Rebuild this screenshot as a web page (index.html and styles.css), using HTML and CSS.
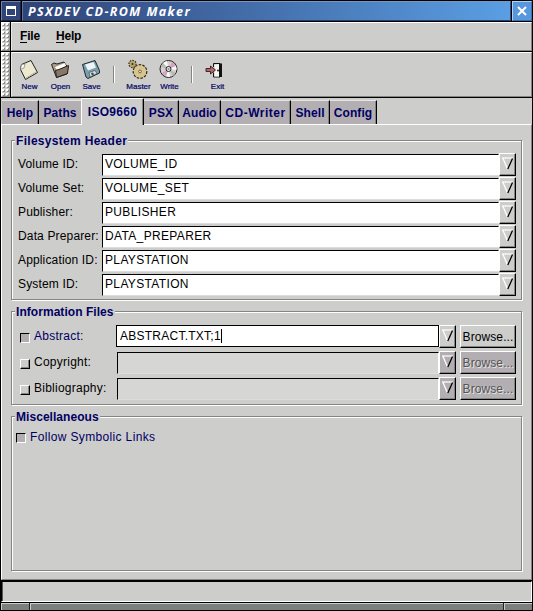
FILE: index.html
```html
<!DOCTYPE html>
<html lang="en">
<head>
<meta charset="utf-8">
<title>PSXDEV CD-ROM Maker</title>
<link rel="stylesheet" href="styles.css">
</head>
<body>
<svg class="defs" aria-hidden="true">
  <symbol id="arrow" viewBox="0 0 12 13">
    <path d="M0 1H11" stroke="#fff" stroke-width="1.2"/>
    <path d="M.8 1L5.300 11.500" stroke="#fff" fill="none" stroke-width="1.300"/>
    <path d="M10.500 1.500L5.800 12" stroke="#000" fill="none" stroke-width="1.300"/>
  </symbol>
</svg>
<div class="window">
  <header class="titlebar">
    <div class="winbtn"><svg width="10" height="10" viewBox="0 0 10 10"><path d="M0 0h10v10H0zM1 3v6h8V3z" fill="#fff" fill-rule="evenodd"/></svg></div>
    <h1 class="title">PSXDEV CD-ROM Maker</h1>
    <div class="winbtn close"><svg width="10" height="10" viewBox="0 0 10 10"><path d="M1 1L9 9M9 1L1 9" stroke="#fff" stroke-width="2"/></svg></div>
  </header>
  <div class="dock menu-dock">
    <div class="handle"></div>
    <nav class="menubar"><span class="m-file"><u>F</u>ile</span><span><u>H</u>elp</span></nav>
  </div>
  <div class="dock tool-dock">
    <div class="handle"></div>
    <div class="toolbar">
      <div class="tool">
        <svg width="20" height="22" viewBox="0 0 20 22"><path d="M2.500 5.500L12 1.500L18.500 13.500L6.500 20.500L1.500 10.500Z" fill="#ece9d0" stroke="#222"/><path d="M2.500 5.500L6 5L5 9L1.500 10.500Z" fill="#fff" stroke="#777" stroke-width=".7"/><path d="M7 19L17 13" stroke="#bbb69a"/></svg>
        <span>New</span></div>
      <div class="tool">
        <svg width="20" height="22" viewBox="0 0 20 22"><path d="M1.500 5.500L4 4L7 5L14 3L16 6L18 8L17 15L6.500 18.500Z" fill="#a99a82" stroke="#222"/><path d="M5 8L15 4L16 7L7 11Z" fill="#fff"/><path d="M6.500 18.500L5.500 11.500L9 10.500L18.500 6.500L17.500 14.500Z" fill="#8a7865" stroke="#222"/></svg>
        <span>Open</span></div>
      <div class="tool">
        <svg width="20" height="22" viewBox="0 0 20 22"><path d="M1.500 5.500L14 1.500L18.500 11.500V14L7 19.500L5 18Z" fill="#7d9dab" stroke="#182b33"/><path d="M4 5.500L12.500 3L15 8.500L7 11.500Z" fill="#eef5f7"/><path d="M8 13.500L14 11.500L16 14.500L9 18Z" fill="#d5dcdf" stroke="#344" stroke-width=".6"/><path d="M10 14L12 13.500L13 15.500L11 16.500Z" fill="#354b57"/></svg>
        <span>Save</span></div>
      <i class="sep sep-a"></i>
      <div class="tool">
        <svg width="20" height="22" viewBox="0 0 20 22"><circle cx="4.500" cy="5" r="3.300" fill="#c5b179" stroke="#352c18" stroke-width="1.800" stroke-dasharray="1.500 1"/><circle cx="4.500" cy="5" r="3" fill="#b9a66f"/><circle cx="4.500" cy="5" r="1" fill="#302713"/><circle cx="12" cy="12.500" r="6.600" fill="#d8c48e" stroke="#352c18" stroke-width="1.600" stroke-dasharray="2.500 1.200"/><circle cx="12" cy="12.500" r="6.200" fill="#d8c48e"/><circle cx="12" cy="12.500" r="1.400" fill="#eee3ba" stroke="#6c5b34" stroke-width=".9"/></svg>
        <span>Master</span></div>
      <div class="tool">
        <svg width="20" height="22" viewBox="0 0 20 22"><circle cx="9.500" cy="10" r="8.500" fill="#d7ced4" stroke="#292329"/><path d="M9.500 10L4 4A8 8 0 0 1 8 2ZM9.500 10L17 7A8 8 0 0 1 17.500 11ZM9.500 10L7 17A8 8 0 0 0 11 18Z" fill="#faf8fa"/><path d="M9.500 10L13 3A8 8 0 0 1 16.500 7ZM9.500 10L3 14A8 8 0 0 0 7 17Z" fill="#d3a4bb"/><path d="M9.500 10L2 8A8 8 0 0 1 4 4ZM9.500 10L16.500 14A8 8 0 0 1 14 17Z" fill="#b4bea9"/><circle cx="9.500" cy="10" r="2.500" fill="#eee" stroke="#222"/><circle cx="9.500" cy="10" r="1" fill="#888"/></svg>
        <span>Write</span></div>
      <i class="sep sep-b"></i>
      <div class="tool exit">
        <svg width="20" height="22" viewBox="0 0 20 22"><path d="M8.500 8V4.500H15V18H8.500V13.500" fill="none" stroke="#111"/><path d="M14 4.500H17V18H14Z" fill="#111"/><path d="M9.500 6L14 5V17.500H9.500Z" fill="#f5f5f2"/><circle cx="13" cy="11.500" r="1" fill="#222"/><path d="M1 9.500H5.500V7L10.500 11L5.500 15V12.500H1Z" fill="#b7646b" stroke="#311b1e" stroke-width=".9"/></svg>
        <span>Exit</span></div>
    </div>
  </div>
  <nav class="tabs">
    <div class="tab t-help">Help</div><div class="tab t-paths">Paths</div><div class="tab t-iso active">ISO9660</div><div class="tab t-psx">PSX</div><div class="tab t-audio">Audio</div><div class="tab t-writer">CD-Writer</div><div class="tab t-shell">Shell</div><div class="tab t-config">Config</div>
  </nav>
  <main class="panel">
    <section class="frame fs-header">
      <h2>Filesystem Header</h2>
      <div class="row"><label>Volume ID:</label><div class="entry">VOLUME_ID</div><div class="drop"><svg><use href="#arrow"/></svg></div></div>
      <div class="row"><label>Volume Set:</label><div class="entry">VOLUME_SET</div><div class="drop"><svg><use href="#arrow"/></svg></div></div>
      <div class="row"><label>Publisher:</label><div class="entry">PUBLISHER</div><div class="drop"><svg><use href="#arrow"/></svg></div></div>
      <div class="row"><label>Data Preparer:</label><div class="entry">DATA_PREPARER</div><div class="drop"><svg><use href="#arrow"/></svg></div></div>
      <div class="row"><label>Application ID:</label><div class="entry">PLAYSTATION</div><div class="drop"><svg><use href="#arrow"/></svg></div></div>
      <div class="row"><label>System ID:</label><div class="entry">PLAYSTATION</div><div class="drop"><svg><use href="#arrow"/></svg></div></div>
    </section>
    <section class="frame info">
      <h2>Information Files</h2>
      <div class="row"><i class="check on"></i><label class="navy">Abstract:</label><div class="entry focus">ABSTRACT.TXT;1<b class="caret"></b></div><div class="drop"><svg><use href="#arrow"/></svg></div><div class="button">Browse...</div></div>
      <div class="row off"><i class="check"></i><label>Copyright:</label><div class="entry"></div><div class="drop"><svg><use href="#arrow"/></svg></div><div class="button">Browse...</div></div>
      <div class="row off"><i class="check"></i><label>Bibliography:</label><div class="entry"></div><div class="drop"><svg><use href="#arrow"/></svg></div><div class="button">Browse...</div></div>
    </section>
    <section class="frame misc">
      <h2>Miscellaneous</h2>
      <div class="follow"><i class="check on"></i><label class="navy">Follow Symbolic Links</label></div>
    </section>
  </main>
  <footer class="status"></footer>
  <div class="resize"><i></i><i></i><i></i></div>
</div>
</body>
</html>
```
FILE: styles.css
```css
* { box-sizing: border-box; }
body { margin: 0; background: #000; font: 12px/14px "Liberation Sans", sans-serif; letter-spacing: .2px; color: #000; }
i, u { font-style: normal; }
svg { display: block; flex: none; }
.defs { position: absolute; width: 0; height: 0; }
.window { width: 533px; height: 611px; padding: 1px; display: flex; flex-direction: column; background: #000; overflow: hidden; }

.titlebar { height: 20px; margin-bottom: 1px; display: flex; gap: 1px; }
.winbtn { width: 20px; border: 1px solid; border-color: #7182b0 #172447 #172447 #7182b0; background: #304478; display: flex; align-items: center; justify-content: center; }
.winbtn.close { background: #5797dc; border-color: #b0d2f5 #3970ae #3970ae #b0d2f5; }
.title { flex: 1; margin: 0; padding-left: 5px; border: 1px solid; border-color: #7898c4 #2a4f86 #24406d #62749e; background: linear-gradient(90deg, #304377, #5a9ee3); color: #fff; font: italic bold 12.5px/20px "Open Sans", sans-serif; letter-spacing: 1.4px; white-space: nowrap; }

.dock { display: flex; gap: 1px; margin-bottom: 1px; }
.menu-dock { height: 29px; }
.tool-dock { height: 45px; }
.handle { width: 9px; border: 1px solid; border-color: #fff #999 #848684 #fff; background: radial-gradient(circle at 1px 1px, #fff 0 .8px, transparent 1px) 0 0 / 4px 4px, radial-gradient(circle at 2px 2px, #8c8c8c 0 .8px, transparent 1px) 0 0 / 4px 4px, #cdcdcb; }
.menubar, .toolbar { flex: 1; display: flex; background: #cdcdcb; border: 1px solid; border-color: #fff #848684 #848684 #e8e8e8; }
.menubar { padding: 6px 0 0 8px; font-weight: bold; letter-spacing: -.2px; }
.menubar .m-file { width: 36px; }
.menubar u { text-decoration: none; border-bottom: 1px solid #000; display: inline-block; height: 14px; }
.toolbar { padding: 6px 0 0 2px; color: #000063; }
.tool { width: 31px; display: flex; flex-direction: column; align-items: center; font-size: 8px; line-height: 9px; letter-spacing: 0; -webkit-text-stroke: .2px #000063; }
.tool svg { margin-left: -1px; }
.tool span { margin-top: 1px; }
.exit svg { margin-left: -6px; }
.sep { width: 2px; height: 17px; border-left: 1px solid #848684; border-right: 1px solid #fff; }
.sep-a { margin: 7px 8px 0 6px; }
.sep-b { margin: 7px 9px 0 6px; }

.tabs { height: 26px; background: #cdcdcb; display: flex; align-items: flex-end; padding-left: 1px; font-weight: bold; color: #000063; letter-spacing: .1px; }
.tab { height: 24px; background: #b3aeb1; border-top: 1px solid #e6e6e6; border-right: 1px solid #000; box-shadow: inset -1px 0 #838383; text-align: center; line-height: 24px; white-space: nowrap; }
.tab.active { height: 27px; margin-bottom: -1px; position: relative; background: #cdcdcb; border-left: 1px solid #fff; border-top-color: #fff; line-height: 26px; }
.t-help { width: 37px; }
.t-paths { width: 42px; border-right: 0; box-shadow: none; }
.t-iso { width: 63px; letter-spacing: .3px; }
.t-psx { width: 35px; }
.t-audio { width: 42px; }
.t-writer { width: 70px; letter-spacing: .5px; }
.t-shell { width: 39px; }
.t-config { width: 47px; }

.panel { height: 457px; background: #cdcdcb; border: 1px solid; border-color: #fff #848684 #848684 #fff; padding: 15px 9px 0 9px; }
.frame { border: 1px solid #848684; box-shadow: inset 1px 1px #fff, 1px 1px #fff; position: relative; }
.frame h2 { position: absolute; left: 3px; top: -7px; margin: 0; padding: 0 1px; background: #cdcdcb; font: bold 12px/14px "Liberation Sans", sans-serif; letter-spacing: .05px; color: #000063; white-space: nowrap; }
.fs-header h2 { letter-spacing: .3px; }
.row { display: flex; height: 24px; white-space: nowrap; }
.row label { width: 84px; padding-top: 4px; letter-spacing: .15px; }
.fs-header { height: 160px; padding: 12px 5px 0 6px; }
.entry { flex: 1; height: 22px; margin-top: 1px; padding: 2px 0 0 2px; background: #fff; border: 1px solid; border-color: #000 #fff #ddd #000; letter-spacing: .35px; }
.drop { width: 17px; height: 23px; padding: 3px 0 0 3px; background: #cdcdcb; border: 1px solid; border-color: #fff #000 #000 #fff; box-shadow: inset -1px -1px #848684; }
.drop svg { width: 12px; height: 13px; margin-left: -1px; }
.info { margin-top: 11px; height: 94px; padding: 13px 5px 0 8px; }
.info .row { height: 26px; }
.info .row label { width: 82px; padding-top: 4px; letter-spacing: .25px; }
.info .entry { margin-top: 1px; padding-left: 3px; margin-left: 1px; }
.info .entry.focus { margin: 0; height: 22px; padding: 3px 0 0 3px; border-color: #000; display: flex; letter-spacing: .25px; }
.caret { width: 1px; height: 14px; background: #000; }
.check { width: 10px; height: 10px; margin: 8px 4px 0 0; border: 1px solid; border-color: #fff #000 #000 #fff; box-shadow: inset -1px -1px #848684; flex: none; background: #cdcdcb; }
.check.on { background: #b3aeb1; border-color: #000 #fff #fff #000; box-shadow: none; }
.navy { color: #000063; }
.button { width: 56px; height: 23px; margin-left: 4px; padding-top: 4px; text-align: center; letter-spacing: .1px; background: #cdcdcb; border: 1px solid; border-color: #fff #000 #000 #fff; box-shadow: inset -1px -1px #848684; }
.off .entry { background: #d6d6d5; }
.off .drop, .off .button { background: #b3aeb1; }
.off .button { color: #555; text-shadow: 1px 1px #e4e4e4; }
.misc { margin-top: 11px; height: 155px; padding: 12px 0 0 4px; }
.follow { display: flex; letter-spacing: .35px; }
.follow .check { margin-top: 4px; }
.follow label { padding-top: 1px; }

.status { height: 21px; margin-top: 1px; background: #cdcdcb; border: 1px solid; border-color: #000 #fff #fff #000; box-shadow: inset 1px 0 #555; flex: none; }
.resize { margin-top: 1px; height: 7px; display: flex; gap: 1px; background: #222; flex: none; }
.resize i { background: #7b7f7d; border-top: 1px solid #c8cccb; border-left: 1px solid #c8cccb; width: 28px; }
.resize i:nth-child(2) { flex: 1; }
```
